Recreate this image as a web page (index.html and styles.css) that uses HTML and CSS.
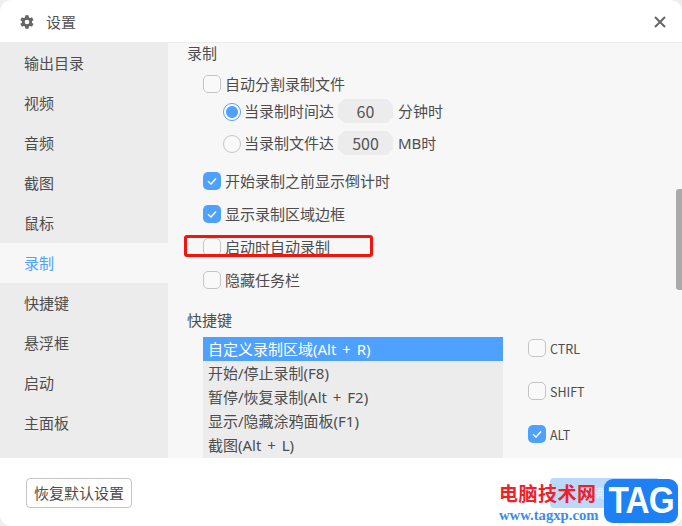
FILE: index.html
```html
<!DOCTYPE html>
<html lang="zh-CN">
<head>
<meta charset="utf-8">
<title>设置</title>
<link rel="stylesheet" href="styles.css">
</head>
<body>
<div class="window">
  <header class="titlebar">
    <svg class="gear" viewBox="0 0 24 24" width="16" height="16"><path fill="#666" d="M19.4 13c.1-.3.1-.7.1-1s0-.7-.1-1l2.1-1.6c.2-.2.2-.4.1-.6l-2-3.5c-.1-.2-.4-.3-.6-.2l-2.5 1c-.5-.4-1.100-.7-1.700-1L14.400 2.400c0-.2-.2-.4-.5-.4h-4c-.2 0-.4.200-.5.400L9 5.100c-.6.300-1.200.6-1.700 1l-2.500-1c-.2-.1-.5 0-.6.200l-2 3.500c-.1.200-.1.500.1.600L4.400 11c0 .3-.1.700-.1 1s0 .7.100 1l-2.100 1.600c-.2.200-.2.400-.1.600l2 3.500c.1.200.4.300.6.200l2.500-1c.5.400 1.100.7 1.700 1l.4 2.700c0 .2.200.4.500.4h4c.2 0 .4-.2.500-.4l.4-2.700c.6-.3 1.200-.6 1.700-1l2.500 1c.2.100.5 0 .6-.2l2-3.500c.1-.2.100-.4-.1-.6zM12 15.500a3.500 3.500 0 1 1 0-7 3.500 3.500 0 0 1 0 7z"/></svg>
    <span class="title">设置</span>
    <svg class="close" viewBox="0 0 12 12" width="12" height="12"><path d="M1 1l10 10M11 1L1 11" stroke="#666" stroke-width="2" fill="none"/></svg>
  </header>
  <div class="main">
    <nav class="sidebar">
      <a class="nav-item">输出目录</a>
      <a class="nav-item">视频</a>
      <a class="nav-item">音频</a>
      <a class="nav-item">截图</a>
      <a class="nav-item">鼠标</a>
      <a class="nav-item active">录制</a>
      <a class="nav-item">快捷键</a>
      <a class="nav-item">悬浮框</a>
      <a class="nav-item">启动</a>
      <a class="nav-item">主面板</a>
    </nav>
    <section class="content">
      <h2 class="heading">录制</h2>
      <div class="options">
        <label class="row first"><span class="check"></span>自动分割录制文件</label>
        <div class="radio-row"><span class="radio on"></span><span class="radio-label">当录制时间达</span><span class="field">60</span><span class="unit">分钟时</span></div>
        <div class="radio-row"><span class="radio"></span><span class="radio-label">当录制文件达</span><span class="field">500</span><span class="unit">MB时</span></div>
        <label class="row after-radio"><span class="check on"><svg viewBox="0 0 18 18" width="18" height="18"><path d="M5 9.300l3 2.700 5-5.500" stroke="#fff" stroke-width="1.500" fill="none"/></svg></span>开始录制之前显示倒计时</label>
        <label class="row"><span class="check on"><svg viewBox="0 0 18 18" width="18" height="18"><path d="M5 9.300l3 2.700 5-5.500" stroke="#fff" stroke-width="1.500" fill="none"/></svg></span>显示录制区域边框</label>
        <label class="row"><span class="check"></span>启动时自动录制</label>
        <label class="row"><span class="check"></span>隐藏任务栏</label>
      </div>
      <h2 class="heading second">快捷键</h2>
      <div class="shortcuts">
        <ul class="list">
          <li class="selected">自定义录制区域(Alt + R)</li>
          <li>开始/停止录制(F8)</li>
          <li>暂停/恢复录制(Alt + F2)</li>
          <li>显示/隐藏涂鸦面板(F1)</li>
          <li>截图(Alt + L)</li>
        </ul>
        <div class="keys">
          <label class="key"><span class="check"></span>CTRL</label>
          <label class="key"><span class="check"></span>SHIFT</label>
          <label class="key"><span class="check on"><svg viewBox="0 0 18 18" width="18" height="18"><path d="M5 9.300l3 2.700 5-5.500" stroke="#fff" stroke-width="1.500" fill="none"/></svg></span>ALT</label>
        </div>
      </div>
    </section>
    <div class="scrollbar"></div>
  </div>
  <footer class="footer">
    <button class="reset">恢复默认设置</button>
    <div class="ok">确定</div>
  </footer>
  <div class="highlight"></div>
  <div class="watermark">
    <div class="wm-text">
      <div class="wm-cn">电脑技术网</div>
      <div class="wm-url">www.tagxp.com</div>
    </div>
    <div class="wm-tag"><span class="wm-tag-text">TAG</span></div>
  </div>
</div>
</body>
</html>
```
FILE: styles.css
```css
* { box-sizing: border-box; }
html, body { margin: 0; padding: 0; background: #efefef; }
body { width: 682px; height: 526px; overflow: hidden; font-family: "Noto Sans CJK SC", "Noto Sans", sans-serif; font-size: 15px; line-height: 20px; color: #4d4d4d; }
.window { position: relative; width: 682px; height: 526px; background: #fff; border-radius: 12px; overflow: hidden; display: flex; flex-direction: column; }
.titlebar { height: 43px; flex: none; display: flex; align-items: center; padding: 1px 16px 0 19px; border-bottom: 1px solid #ececec; }
.gear { flex: none; }
.title { margin-left: 11px; color: #555; }
.close { margin-left: auto; }
.main { position: relative; height: 415px; flex: none; display: flex; overflow: hidden; background: #f7f7f7; }
.sidebar { width: 168px; flex: none; background: #ececec; display: flex; flex-direction: column; }
.nav-item { height: 40px; flex: none; display: flex; align-items: center; padding: 0 0 1px 24px; color: #4d4d4d; }
.nav-item.active { background: #f7f7f7; color: #4fa1ff; }
.content { flex: 1; min-width: 0; padding-left: 20px; }
.heading { margin: 0 0 0 -1px; height: 20px; line-height: 19px; font-size: 15px; font-weight: 400; color: #4d4d4d; }
.heading.second { margin-top: 13px; }
.options { padding-left: 15px; margin-top: 5px; }
.row { height: 33px; display: flex; align-items: flex-start; gap: 4px; padding-top: 7px; line-height: 18px; }
.row.first { height: 31px; }
.after-radio { margin-top: 10px; }
.check { width: 18px; height: 18px; flex: none; border: 1px solid #c4c4c4; border-radius: 5px; background: #f9f9f9; display: block; }
.check.on { border: 0; background: #4fa1ff; }
.check svg { display: block; }
.radio-row { height: 24px; display: flex; align-items: center; padding-left: 20px; margin-bottom: 8px; }
.radio-row:last-of-type { margin-bottom: 0; }
.radio { width: 18px; height: 18px; flex: none; margin-top: 1px; border: 1px solid #c4c4c4; border-radius: 50%; background: #f9f9f9; }
.radio.on { border-color: #4fa1ff; background: radial-gradient(circle, #4fa1ff 0 5.500px, #fff 6.500px); }
.radio-label { margin-left: 3px; width: 94px; flex: none; }
.field { width: 55px; height: 24px; flex: none; background: #ececec; clip-path: polygon(6px 0, 49px 0, 55px 6px, 55px 18px, 49px 24px, 6px 24px, 0 18px, 0 6px); display: flex; align-items: center; justify-content: center; font-size: 16px; color: #555; }
.unit { margin-left: 5px; font-family: "Noto Sans", "Noto Sans CJK SC", sans-serif; }
.shortcuts { display: flex; gap: 25px; margin-top: 7px; padding-left: 15px; }
.list { width: 300px; height: 140px; flex: none; margin: 0; padding: 0; list-style: none; background: #ececec; font-family: "Noto Sans", "Noto Sans CJK SC", sans-serif; word-spacing: 2px; }
.list li { height: 24px; line-height: 24px; padding-left: 5px; }
.list li.selected { background: #4fa1ff; color: #fff; }
.keys { display: flex; flex-direction: column; gap: 25px; padding-top: 2px; }
.key { height: 18px; display: flex; align-items: center; gap: 4px; font-size: 12.500px; line-height: 17px; color: #4d4d4d; }
.scrollbar { position: absolute; right: 0; top: 146px; width: 6px; height: 101px; background: #aaa; border-radius: 3px 0 0 3px; }
.footer { flex: 1; position: relative; padding: 20px 0 0 26px; background: #fff; }
.reset { display: block; width: 106px; height: 30px; padding: 0; background: #fff; border: 1px solid #c4c4c4; border-radius: 4px; font: inherit; color: #4d4d4d; }
.ok { position: absolute; left: 550px; top: 20px; width: 110px; height: 30px; background: #b9d9fd; border-radius: 4px; color: #e6f1fe; font-size: 12px; line-height: 30px; text-align: center; }
.highlight { position: absolute; left: 184px; top: 235px; width: 189px; height: 22px; border: 3px solid #f3140c; border-radius: 3px; }
.watermark { position: absolute; left: 499px; top: 479px; display: flex; gap: 6px; }
.wm-text { width: 99px; padding-top: 3px; }
.wm-cn { height: 22px; line-height: 22px; font-size: 19px; font-weight: 700; color: #f0202a; letter-spacing: 0.500px; white-space: nowrap; }
.wm-url { margin-top: 3px; height: 16px; line-height: 16px; font-family: "Liberation Serif", serif; font-size: 14.700px; font-weight: 700; color: #3d8bef; white-space: nowrap; }
.wm-tag { width: 74px; height: 44px; background: #1d80f5; border-radius: 9px; color: #fff; font-family: "Liberation Sans", sans-serif; font-size: 37px; font-weight: 700; line-height: 44px; display: flex; justify-content: center; }
.wm-tag-text { display: block; letter-spacing: -1px; transform: scaleX(0.9); }
```
